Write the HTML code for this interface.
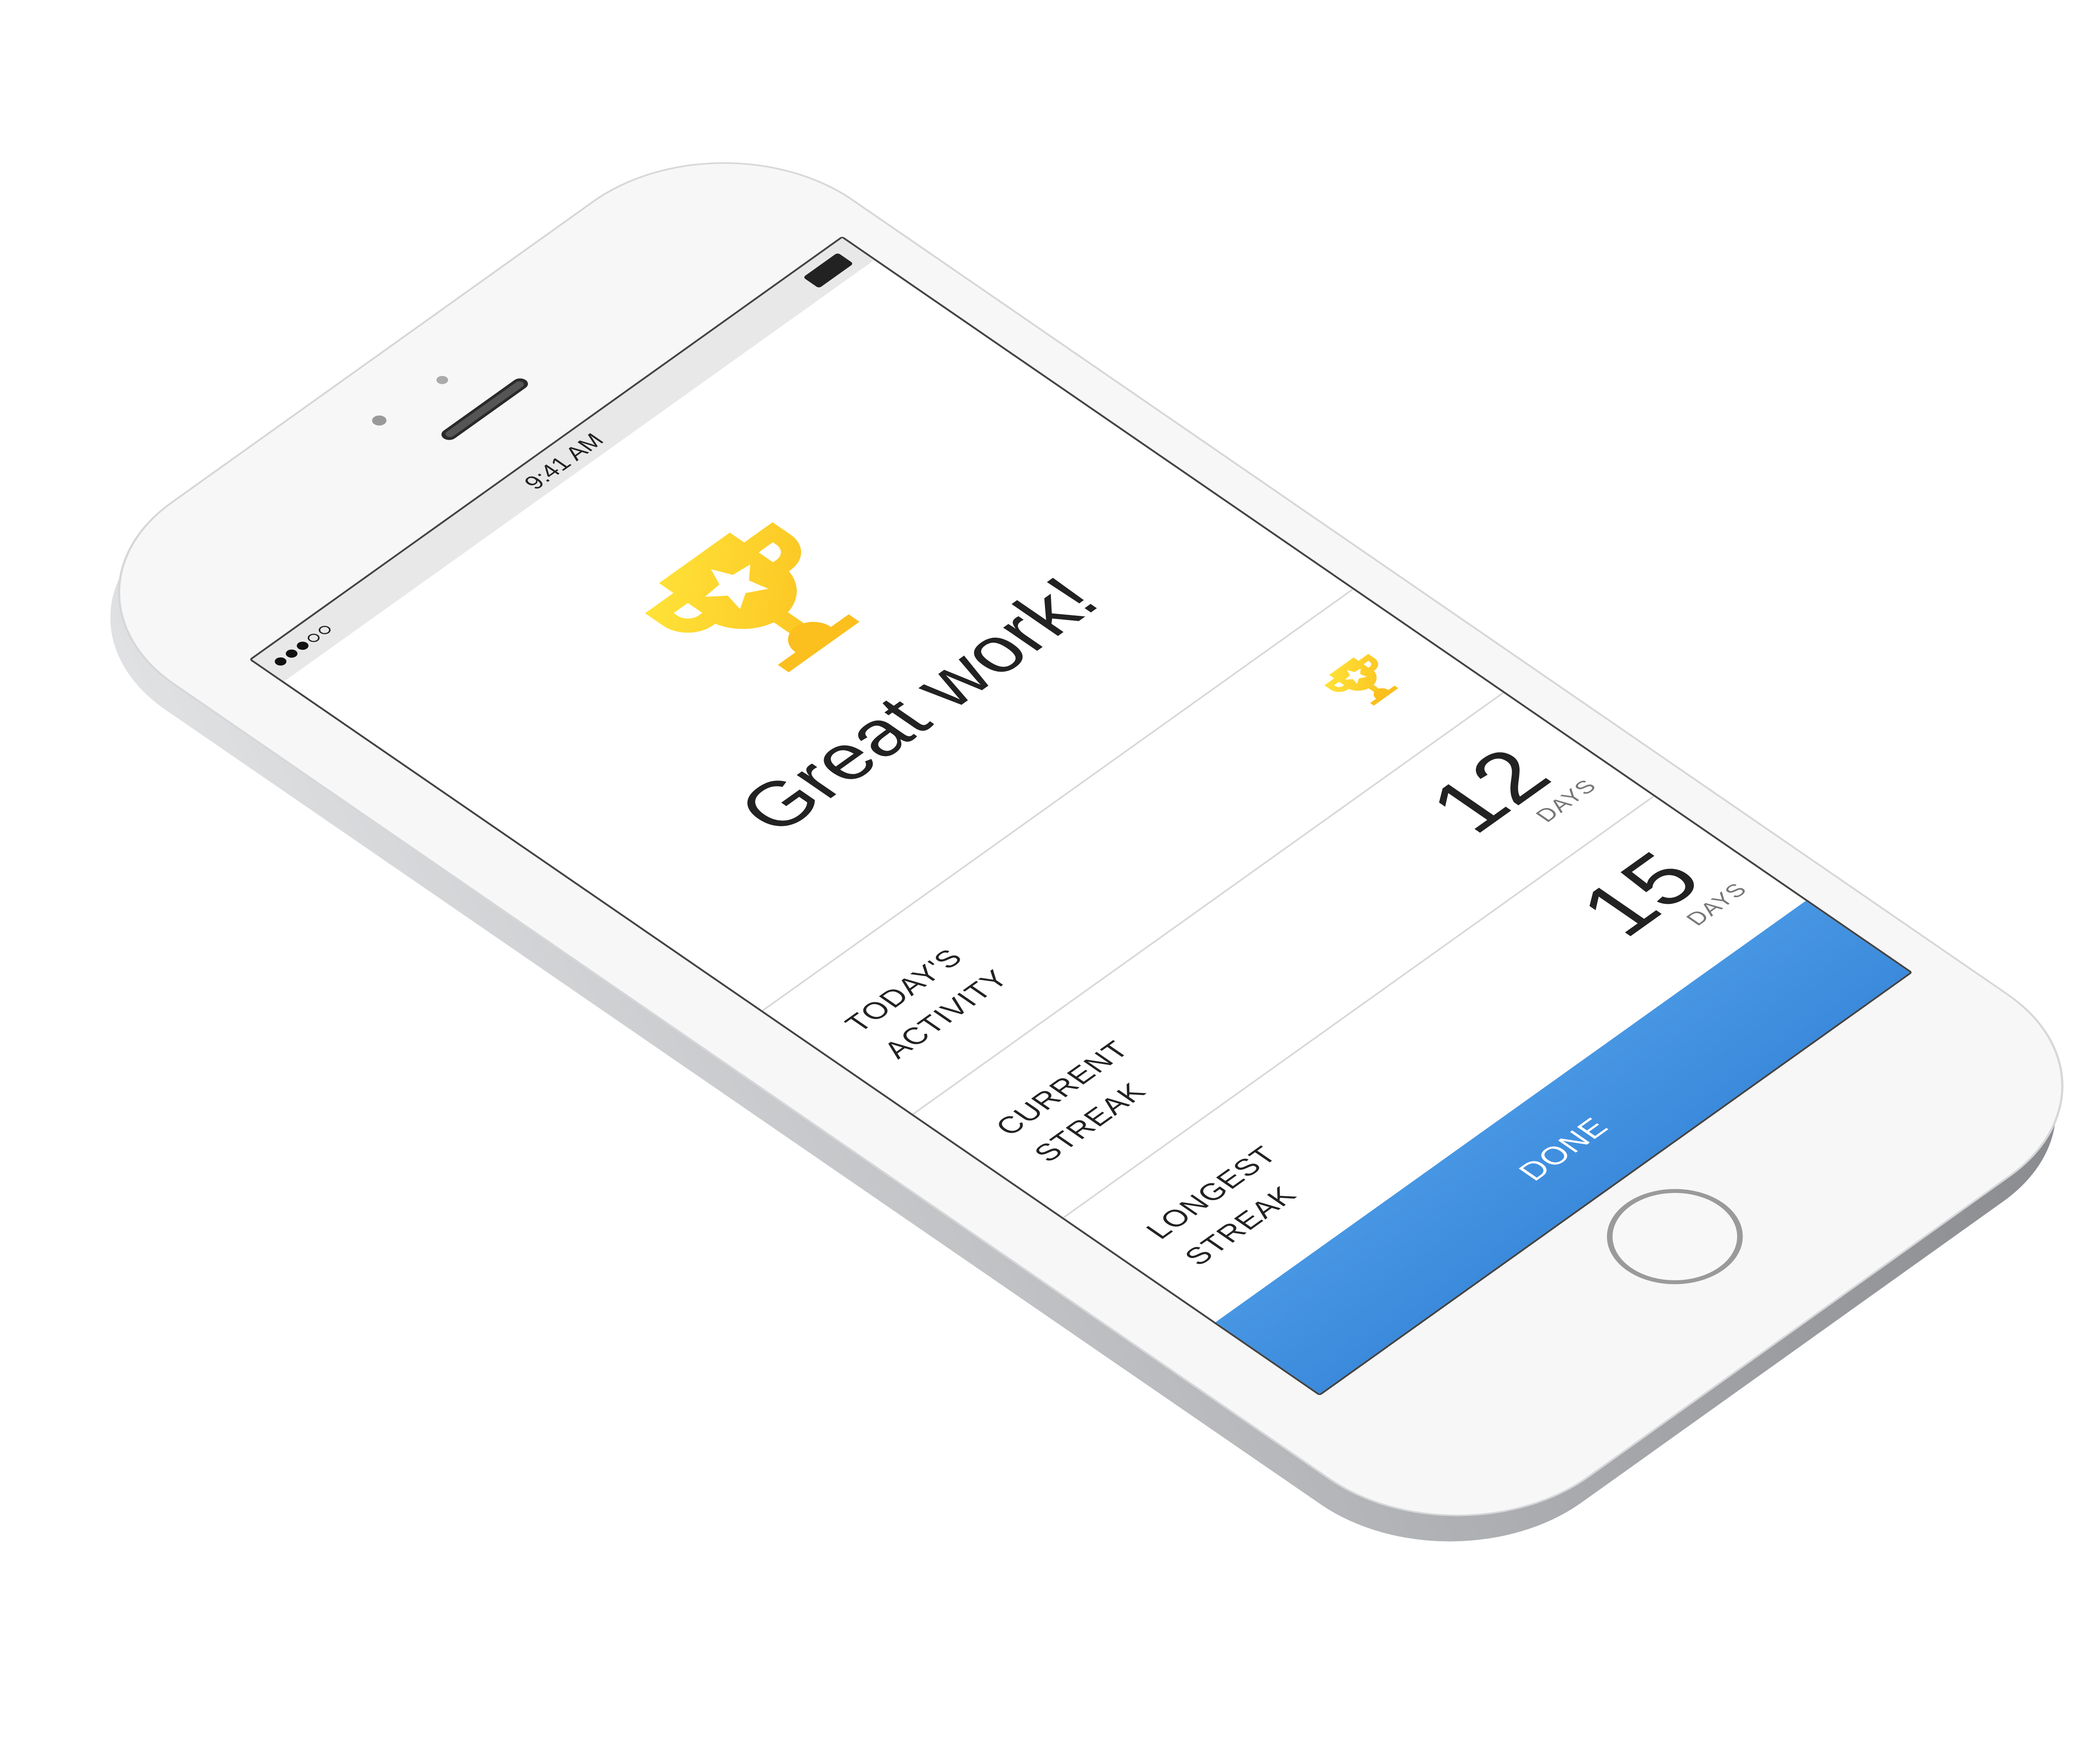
<!DOCTYPE html>
<html><head><meta charset="utf-8"><style>
html,body{margin:0;padding:0;background:#fff;overflow:hidden;}
svg{display:block;}
text{font-family:"Liberation Sans",sans-serif;}
</style></head><body>
<svg width="5275" height="4183" viewBox="0 0 5275 4183" xmlns="http://www.w3.org/2000/svg">
<defs>
<linearGradient id="side" x1="0" y1="0" x2="1" y2="1">
<stop offset="0" stop-color="#e4e5e7"/><stop offset="0.5" stop-color="#b0b2b5"/><stop offset="1" stop-color="#85878b"/>
</linearGradient>
<linearGradient id="gold" x1="0" y1="0" x2="1" y2="1">
<stop offset="0" stop-color="#ffe53a"/><stop offset="1" stop-color="#fbbd1c"/>
</linearGradient>
<linearGradient id="btn" x1="0" y1="0" x2="0" y2="1">
<stop offset="0" stop-color="#4796e3"/><stop offset="1" stop-color="#3b8adc"/>
</linearGradient>
<g id="trophy">
<path d="M7 3h10v2h4v2.5a3.5 3.5 0 0 1-3.5 3.5h-0.3a5.5 5.5 0 0 1-4.2 4V18h-2V15a5.5 5.5 0 0 1-4.2-4H6.5A3.5 3.5 0 0 1 3 7.5V5h4zM5 7v0.5A1.5 1.5 0 0 0 6.5 9h0.5V7zM17 7v2h0.5A1.5 1.5 0 0 0 19 7.5V7z" fill="url(#gold)" fill-rule="evenodd"/>
<path d="M7 21v-1.5h2.5a2.5 2.5 0 0 1 5 0H17V21z" fill="#fbbf1e"/>
<path d="M12 5.3l.95 2.1 2.25.2-1.7 1.5.5 2.2-2-1.2-2 1.2.5-2.2-1.7-1.5 2.25-.2z" fill="#fff"/>
</g>
</defs>
<g transform="translate(-18,60) matrix(3.747,-2.675,3.811,2.621,600,1570)">
<rect x="-36" y="-96" width="432" height="886" rx="82" fill="url(#side)"/>
</g>
<g transform="matrix(3.747,-2.675,3.811,2.621,600,1570)">
<rect x="-36" y="-96" width="432" height="886" rx="82" fill="#d6d7d9"/>
<rect x="-35" y="-95" width="430" height="884" rx="81" fill="#f7f7f7"/>
<rect x="160" y="-41" width="52" height="7" rx="3.5" fill="#2a2a2a"/>
<rect x="162" y="-39.5" width="48" height="4" rx="2" fill="#555"/>
<circle cx="148" cy="-66" r="3.2" fill="#999"/>
<circle cx="186" cy="-64" r="2.6" fill="#aaa"/>
<circle cx="182" cy="710" r="29" fill="#f8f8f8" stroke="#9a9a9a" stroke-width="2.5"/>
<rect x="-1" y="-1" width="377" height="669" rx="1.5" fill="#444"/>
<rect x="0" y="0" width="375" height="667" fill="#fff"/>
<rect x="0" y="0" width="375" height="20" fill="#e8e8e8"/>
<text x="187" y="15" font-size="12" text-anchor="middle" fill="#222">9:41 AM</text>
<g fill="#111"><circle cx="8" cy="10" r="2.6"/><circle cx="15" cy="10" r="2.6"/><circle cx="22" cy="10" r="2.6"/></g>
<g fill="none" stroke="#222" stroke-width="0.7"><circle cx="29" cy="10" r="2.3"/><circle cx="36" cy="10" r="2.3"/></g>
<rect x="345" y="5" width="22" height="10" rx="1.5" fill="#222"/>
<use href="#trophy" transform="translate(130,82) scale(4.5)"/>
<text x="187" y="246" font-size="40" text-anchor="middle" fill="#222">Great work!</text>
<g stroke="#d8d8d8" stroke-width="0.9">
<line x1="0" y1="319" x2="375" y2="319"/>
<line x1="0" y1="413" x2="375" y2="413"/>
<line x1="0" y1="507" x2="375" y2="507"/>
</g>
<g font-size="15" fill="#222" letter-spacing="0.5">
<text x="20" y="360">TODAY'S</text><text x="20" y="384">ACTIVITY</text>
<text x="20" y="454">CURRENT</text><text x="20" y="478">STREAK</text>
<text x="20" y="548">LONGEST</text><text x="20" y="572">STREAK</text>
</g>
<use href="#trophy" transform="translate(318,345) scale(1.55)"/>
<text x="352" y="468" font-size="46" text-anchor="end" fill="#222">12</text>
<text x="362" y="485" font-size="11.5" text-anchor="end" fill="#777" letter-spacing="0.5">DAYS</text>
<text x="352" y="562" font-size="46" text-anchor="end" fill="#222">15</text>
<text x="362" y="579" font-size="11.5" text-anchor="end" fill="#777" letter-spacing="0.5">DAYS</text>
<rect x="0" y="602" width="375" height="65" fill="url(#btn)"/>
<text x="187" y="641" font-size="16" text-anchor="middle" fill="#fff" letter-spacing="0.5">DONE</text>
</g>
</svg>
</body></html>
